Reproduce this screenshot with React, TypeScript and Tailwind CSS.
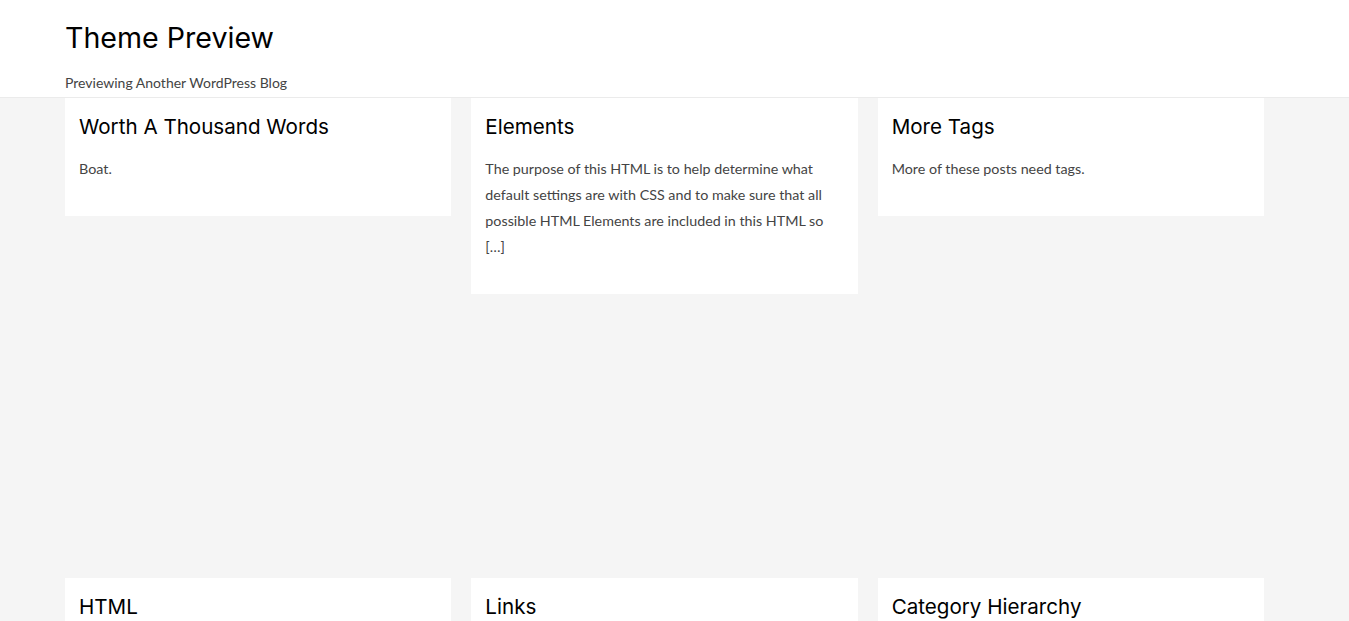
const posts = [
  { title: "Worth A Thousand Words", excerpt: "Boat." },
  {
    title: "Elements",
    excerpt:
      "The purpose of this HTML is to help determine what default settings are with CSS and to make sure that all possible HTML Elements are included in this HTML so […]",
  },
  { title: "More Tags", excerpt: "More of these posts need tags." },
  { title: "HTML", excerpt: "" },
  { title: "Links", excerpt: "" },
  { title: "Category Hierarchy", excerpt: "" },
];

const heading = { fontFamily: '"Inter", "Liberation Sans", sans-serif' };
const body = { fontFamily: '"Lato", "Liberation Sans", sans-serif' };

export default function App() {
  return (
    <div className="min-h-screen bg-[#f5f5f5]">
      <header className="h-[98px] border-b border-[#ebebeb] bg-white px-[65px] pt-[20px]">
        <h1 style={heading} className="text-[28.6px] font-normal leading-[36px] text-black">
          Theme Preview
        </h1>
        <p style={body} className="mt-[18px] text-[14px] leading-[18px] text-[#444]">
          Previewing Another WordPress Blog
        </p>
      </header>
      <main className="px-[65px]">
        <div className="grid w-[1199px] grid-cols-3 gap-x-[20px] gap-y-[20px] [grid-template-rows:460px_auto]">
          {posts.map((p) => (
            <article key={p.title} className="self-start bg-white px-[14px] pt-[14px] pb-[34px]">
              <h2 style={heading} className="text-[20.6px] font-normal leading-[30px] text-black">
                {p.title}
              </h2>
              {p.excerpt && (
                <p style={body} className="mt-[14px] text-[14.3px] leading-[26px] text-[#444]">
                  {p.excerpt}
                </p>
              )}
            </article>
          ))}
        </div>
      </main>
    </div>
  );
}
